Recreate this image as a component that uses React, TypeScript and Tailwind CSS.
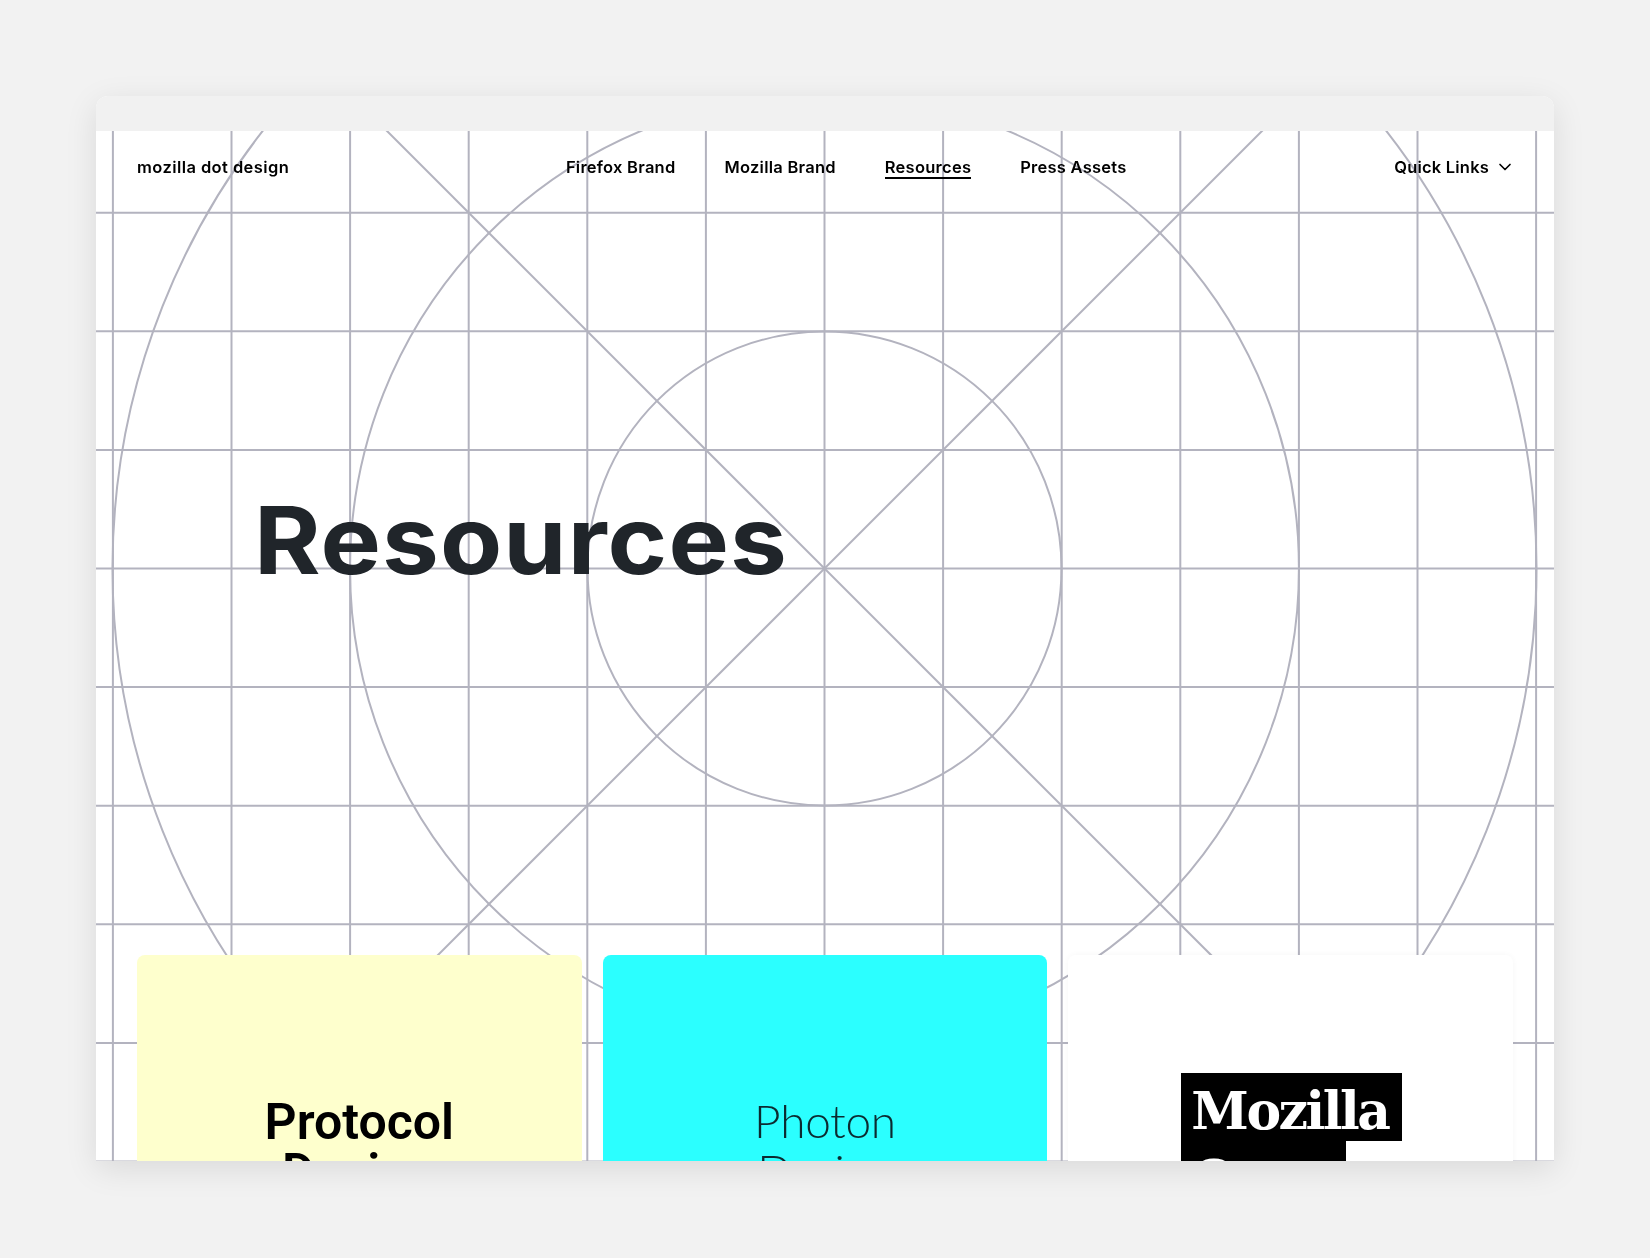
import { ChevronDown } from "lucide-react";

const verticals = [-6, -5, -4, -3, -2, -1, 0, 1, 2, 3, 4, 5, 6];
const horizontals = [-3, -2, -1, 0, 1, 2, 3, 4, 5];
const UNIT = 118.6;
const CX = 728.5;
const CY = 437.5;

function GridBackground() {
    return (
        <svg className="absolute left-0 top-0" width="1458" height="1030" viewBox="0 0 1458 1030" fill="none" stroke="#b3b3bf">
            {verticals.map((k) => (
                <line key={k} x1={CX + k * UNIT} y1="0" x2={CX + k * UNIT} y2="1030" strokeWidth="2" />
            ))}
            {horizontals.map((k) => (
                <line key={k} x1="0" y1={CY + k * UNIT} x2="1458" y2={CY + k * UNIT} strokeWidth="2" />
            ))}
            <line x1={CX - 711} y1={CY - 711} x2={CX + 711} y2={CY + 711} strokeWidth="2" />
            <line x1={CX + 711} y1={CY - 711} x2={CX - 711} y2={CY + 711} strokeWidth="2" />
            <circle cx={CX} cy={CY} r="237" strokeWidth="2" />
            <circle cx={CX} cy={CY} r="474.5" strokeWidth="2" />
            <circle cx={CX} cy={CY} r="712" strokeWidth="2" />
        </svg>
    );
}

function NavLink({ label, active }: { label: string; active?: boolean }) {
    return (
        <a className={active ? "border-b-2 border-black leading-[19px]" : "leading-[19px] border-b-2 border-transparent"}>{label}</a>
    );
}

export default function App() {
    return (
        <div className="h-[1258px] overflow-hidden bg-[#f2f2f2] pt-[96px] font-['Inter',sans-serif]">
            <div className="mx-auto h-[1065px] w-[1458px] overflow-hidden rounded-t-xl bg-white shadow-[0_8px_32px_rgba(0,0,0,0.1)]">
                <div className="h-[35px] bg-[#f1f1f1]" />
                <main className="relative h-[1030px] overflow-hidden blur-[0.4px]">
                    <GridBackground />
                    <header className="relative flex h-[74px] items-center justify-between px-[41px] text-[16.5px] font-semibold tracking-[0.3px] text-black">
                        <div className="flex tracking-[0.42px]">
                            <NavLink label="mozilla dot design" />
                        </div>
                        <nav className="ml-[9px] flex gap-[49px] tracking-[0.25px]">
                            <NavLink label="Firefox Brand" />
                            <NavLink label="Mozilla Brand" />
                            <NavLink label="Resources" active />
                            <NavLink label="Press Assets" />
                        </nav>
                        <button className="-mr-[2px] flex items-center gap-[6px] pb-[2px] font-semibold leading-[19px] tracking-[0.2px]">
                            Quick Links
                            <ChevronDown size={20} strokeWidth={2} />
                        </button>
                    </header>
                    <section className="relative h-[750px] pl-[158px] pt-[288px]">
                        <h1 className="origin-left scale-x-[1.08] text-[94px] font-bold leading-none tracking-[1px] text-[#20252a]">Resources</h1>
                    </section>
                    <section className="relative grid grid-cols-3 gap-[21px] px-[41px]">
                        <div className="h-[300px] rounded-lg bg-[#feffcd] pt-[142px] text-center font-['Roboto',sans-serif] text-[50px] font-semibold leading-[50px] text-black">
                            Protocol
                            <br />
                            Design
                        </div>
                        <div className="h-[300px] rounded-lg bg-[#2bffff] pt-[141px] text-center font-['Lato',sans-serif] text-[46px] font-light leading-[50px] tracking-[-0.3px] text-[#0c2a30]">
                            Photon
                            <br />
                            Design
                        </div>
                        <div className="h-[300px] rounded-lg bg-white pt-[118px] shadow-[0_0_6px_rgba(0,0,0,0.04)]">
                            <div className="ml-[113px] flex flex-col items-start font-['DejaVu_Serif',serif] font-bold text-white">
                                <span className="h-[68px] w-[221px] bg-black pl-[10px] pt-[4px] text-[52px] leading-[68px] tracking-[-2.5px]">Mozilla</span>
                                <span className="h-[68px] w-[165px] bg-black pl-[10px] pt-[4px] text-[52px] leading-[68px] tracking-[-2.5px]">Open</span>
                            </div>
                        </div>
                    </section>
                </main>
            </div>
        </div>
    );
}
